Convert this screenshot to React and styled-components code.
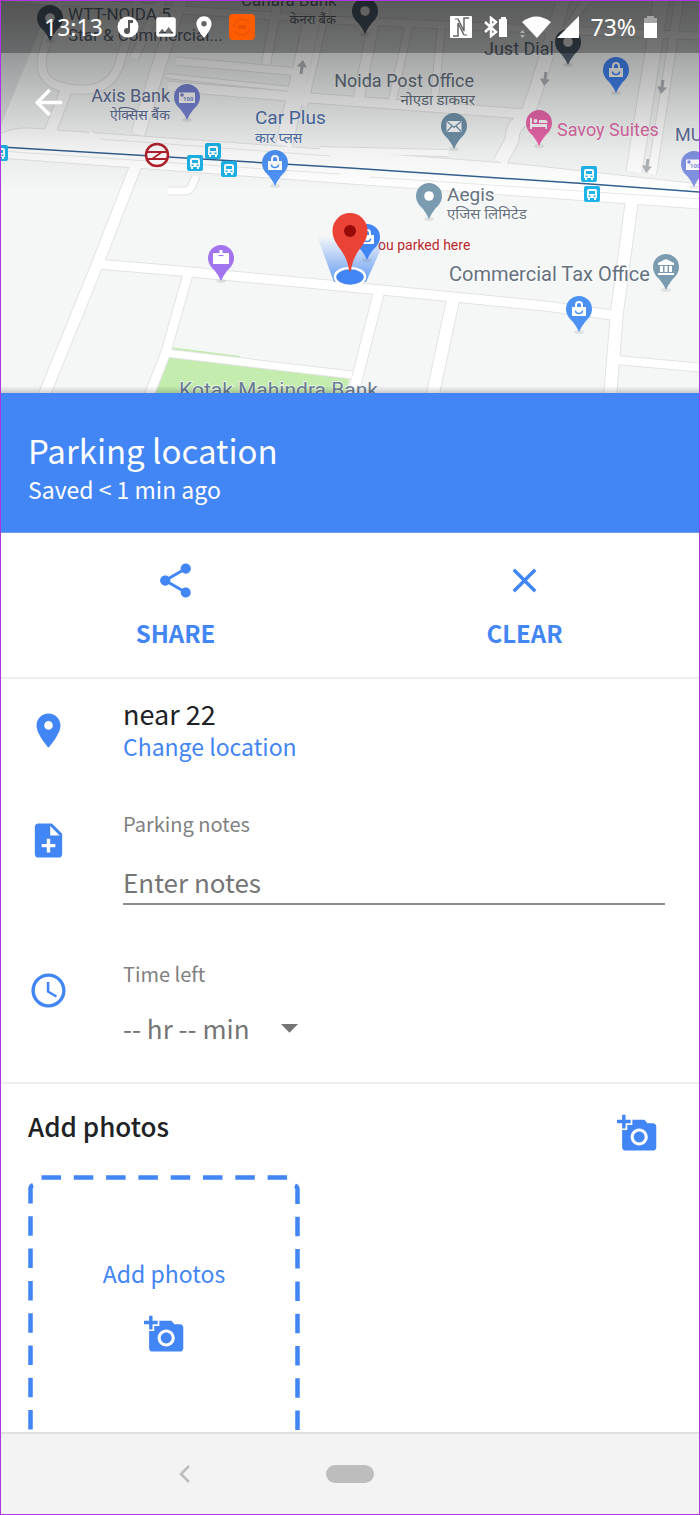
import React from 'react';
import styled, { createGlobalStyle } from 'styled-components';
import {
    MdAccessTime,
    MdAddAPhoto,
    MdArrowBack,
    MdArrowDropDown,
    MdClose,
    MdImage,
    MdNoteAdd,
    MdPlace,
    MdShare
} from 'react-icons/md';

const blue = '#4285f4';
const textFont = '"Noto Sans CJK JP", "Noto Sans", sans-serif';

const GlobalStyle = createGlobalStyle`
    * {
        box-sizing: border-box;
    }

    body {
        margin: 0;
        background: #fff;
        font-family: ${textFont};
    }

    button, input, select {
        font-family: inherit;
    }
`;

const Screen = styled.div`
    display: flex;
    flex-direction: column;
    height: 100vh;
    border: 1px solid #b035e0;
    overflow: hidden;
`;

const MapArea = styled.section`
    position: relative;
    flex: none;
    aspect-ratio: 698 / 392;
    overflow: hidden;
`;

const MapCanvas = styled.svg`
    display: block;
    width: 100%;
    height: 100%;
    font-family: Roboto, "Noto Sans", sans-serif;
`;

const StatusBar = styled.div`
    position: absolute;
    top: 0;
    left: 0;
    right: 0;
    display: flex;
    align-items: center;
    justify-content: space-between;
    height: 52px;
    padding: 0 42px 0 43px;
    background: rgba(0, 0, 0, 0.3);
    color: #fff;
    font-family: "Noto Sans", sans-serif;
    font-size: 23px;
`;

const StatusGroup = styled.div`
    display: flex;
    align-items: center;
    gap: ${({ $gap }) => $gap}px;

    svg {
        display: block;
    }
`;

const BackButton = styled.button`
    position: absolute;
    top: 81px;
    left: 27px;
    display: flex;
    padding: 0;
    border: 0;
    background: none;
    color: #fff;
    font-size: 41px;
`;

const Header = styled.header`
    flex: none;
    padding: 35px 28px 26px 27px;
    background: ${blue};
    border-bottom: 1px solid #6f9fe8;
    color: #fff;
`;

const Title = styled.h1`
    margin: 0;
    font-size: 33px;
    font-weight: 400;
    line-height: 44px;
`;

const Subtitle = styled.p`
    margin: 0;
    font-size: 23px;
    line-height: 34px;
`;

const Actions = styled.div`
    display: flex;
    flex: none;
    height: 146px;
    border-bottom: 2px solid #eee;
`;

const ActionButton = styled.button`
    display: flex;
    flex: 1;
    flex-direction: column;
    align-items: center;
    gap: 14px;
    padding: 27px 0 0;
    border: 0;
    background: none;
    color: ${blue};
    font-size: 24px;
    font-weight: 700;
    line-height: 36px;

    svg {
        font-size: 41px;
    }
`;

const Details = styled.div`
    display: flex;
    flex: none;
    flex-direction: column;
    gap: 46px;
    padding: 18px 34px 34px 27px;
    border-bottom: 2px solid #eee;
`;

const Row = styled.div`
    display: flex;
    align-items: ${({ $center }) => ($center ? 'center' : 'flex-start')};
    gap: 54px;
`;

const RowIcon = styled.span`
    display: flex;
    margin-top: ${({ $drop }) => ($drop ? '11px' : '0')};
    color: ${blue};
    font-size: 41px;
`;

const RowBody = styled.div`
    display: flex;
    flex: 1;
    flex-direction: column;
    align-items: flex-start;
`;

const Place = styled.div`
    color: #202124;
    font-size: 27px;
    line-height: 33px;
`;

const ChangeLink = styled.a`
    color: ${blue};
    font-size: 23px;
    line-height: 33px;
    text-decoration: none;
`;

const FieldLabel = styled.label`
    color: #808080;
    font-size: 20px;
    line-height: 30px;
`;

const NotesInput = styled.input`
    width: 100%;
    height: 46px;
    margin: 20px 0 8px;
    padding: 0;
    border: 0;
    border-bottom: 2px solid #8c8c8c;
    border-radius: 0;
    background: none;
    color: #202124;
    font-size: 26px;
    outline: none;

    &::placeholder {
        color: #757575;
        opacity: 1;
    }
`;

const SelectBox = styled.div`
    display: grid;
    align-items: center;
    justify-items: end;
    width: 187px;
    margin-top: 17px;

    > * {
        grid-area: 1 / 1;
    }

    svg {
        color: #757575;
        font-size: 41px;
        pointer-events: none;
    }
`;

const TimeSelect = styled.select`
    width: 100%;
    height: 42px;
    padding: 0;
    border: 0;
    background: none;
    color: #757575;
    font-size: 26px;
    appearance: none;
`;

const Photos = styled.section`
    flex: 1;
    min-height: 0;
    padding: 22px 41px 0 27px;
    overflow: hidden;
`;

const PhotosHead = styled.div`
    display: flex;
    justify-content: space-between;
    margin-bottom: 21px;
`;

const PhotosTitle = styled.h2`
    margin: 0;
    color: #202124;
    font-size: 26px;
    font-weight: 500;
    line-height: 40px;
`;

const IconButton = styled.button`
    display: flex;
    margin-top: 7px;
    padding: 0;
    border: 0;
    background: none;
    color: ${blue};
    font-size: 41px;
`;

const PhotoTile = styled.button`
    display: grid;
    width: 272px;
    height: 272px;
    padding: 0;
    border: 0;
    background: none;
    color: ${blue};
    font-size: 23px;
    line-height: 36px;

    > * {
        grid-area: 1 / 1;
    }
`;

const TileContent = styled.span`
    display: flex;
    flex-direction: column;
    align-items: center;
    gap: 23px;
    padding-top: 80px;

    svg {
        font-size: 41px;
    }
`;

const NavBar = styled.nav`
    display: grid;
    grid-template-columns: 1fr auto 1fr;
    align-items: center;
    flex: none;
    height: 82px;
    border-top: 2px solid #e0e0e0;
    background: #f3f3f3;
`;

const NavBack = styled.button`
    display: flex;
    justify-self: center;
    padding: 0 0 0 40px;
    border: 0;
    background: none;
`;

const NavHome = styled.button`
    width: 48px;
    height: 18px;
    padding: 0;
    border: 0;
    border-radius: 9px;
    background: #bdbdbd;
`;

const Glyph = ({ type }) => {
    switch (type) {
        case 'bag':
            return (
                <g>
                    <path d="M-7-2H7V7H-7z" fill="#fff" />
                    <path d="M-3-2V-4a3 3 0 0 1 6 0V-2" fill="none" stroke="#fff" strokeWidth="2" />
                    <path d="M-3.5 1.5a3.5 3 0 0 0 7 0" fill="none" stroke="currentColor" strokeWidth="1.6" />
                </g>
            );
        case 'mail':
            return (
                <g>
                    <path d="M-7.5-5h15V6h-15z" fill="#fff" />
                    <path d="M-7-4.500L0 1.500L7-4.500M-7 5.500L-2 0M7 5.500L2 0" fill="none" stroke="currentColor" strokeWidth="1.3" />
                </g>
            );
        case 'bed':
            return (
                <path d="M-9-5h2v6H8v5H6.500V4H-7v2h-2zM0-3h6q2.500 0 2.500 3H0zM-3.500-4a2 2 0 1 1 0 4a2 2 0 0 1 0-4z" fill="#fff" />
            );
        case 'cash':
            return (
                <g>
                    <path d="M-8-4.500H8V6H-8z" fill="#fff" />
                    <circle cx="-5" cy="-2" r="1.800" fill="currentColor" />
                    <text x="-4" y="4" fontSize="6" fontWeight="700" fill="currentColor">100</text>
                </g>
            );
        case 'case':
            return (
                <g>
                    <path d="M-8-5H8V6H-8zM-1.500-8h3v4h-3z" fill="#fff" />
                    <path d="M-2.500-2.500h5" stroke="currentColor" strokeWidth="1.200" />
                </g>
            );
        case 'bank':
            return (
                <path d="M-8-4L0-8L8-4V-2H-8zM-6-1h3v6h-3zM-1.500-1h3v6h-3zM3-1h3v6H3zM-8 6H8V8H-8z" fill="#fff" />
            );
        default:
            return <circle r="4.800" fill="#fff" />;
    }
};

const Pin = ({ x, y, color, type }) => (
    <g transform={`translate(${x} ${y})`} color={color}>
        <ellipse cx="0" cy="23" rx="5" ry="2" fill="#000" opacity="0.08" />
        <path d="M0-13a13 13 0 0 1 13 13C13 6 9 10 6 13Q2 18 0 23Q-2 18-6 13C-9 10-13 6-13 0A13 13 0 0 1 0-13z" fill={color} />
        <Glyph type={type} />
    </g>
);

const Bus = ({ x, y }) => (
    <g transform={`translate(${x} ${y})`}>
        <rect x="-8" y="-8" width="16" height="16" rx="2" fill="#1db4ea" />
        <path d="M-5-3q0-2 2-2h6q2 0 2 2V4H4V6H2V4H-2V6H-4V4H-5z" fill="#fff" />
        <path d="M-3-3H3V0H-3zM-3.500 1.500h2v1.500h-2zM1.500 1.500h2v1.500h-2z" fill="#1db4ea" />
    </g>
);

const roads = [
    ['M62 -5Q50 30 44 50Q34 82 66 88Q106 96 118 68L140 -5', 8],
    ['M67 88L50 132', 11],
    ['M182 -5L158 68L138 134', 13],
    ['M164 -5L134 58', 8],
    ['M278 0L266 64', 8],
    ['M176 61L300 72', 7],
    ['M168 86L310 98L525 114', 9],
    ['M166 76L300 90', 4],
    ['M312 20L284 146', 16],
    ['M330 -5L304 106', 6],
    ['M10 -2L330 20L700 36', 7],
    ['M375 16L358 102', 10],
    ['M410 20L392 102', 7],
    ['M442 22L434 104', 7],
    ['M565 -5L536 90L526 118Q512 124 512 140L500 162', 13],
    ['M590 -5L566 30', 7],
    ['M662 -5L634 172', 15],
    ['M680 -5L652 174', 8],
    ['M320 150L448 153', 6],
    ['M90 132L96 138L330 156', 4],
    ['M136 165L97 265L43 398', 11],
    ['M97 264L180 271L350 287L545 306L612 315', 9],
    ['M188 274L166 352L148 398', 9],
    ['M166 353L352 375', 7],
    ['M379 292L352 398', 10],
    ['M453 300L432 398', 12],
    ['M632 200L617 312L610 398', 12],
    ['M616 360L704 368', 8],
    ['M196 176L192 186Q190 191 184 191H168', 7]
];

const labels = [
    { x: 68, y: 20, size: 17, text: 'WTT-NOIDA 5' },
    { x: 68, y: 41, size: 17, text: 'Star & Commercial...' },
    { x: 241, y: 6, size: 17, text: 'Canara Bank' },
    { x: 336, y: 24, size: 13, text: 'केनरा बैंक', end: true },
    { x: 170, y: 102, size: 18, text: 'Axis Bank', end: true, color: '#62719a' },
    { x: 170, y: 120, size: 14, text: 'ऐक्सिस बैंक', end: true, color: '#62719a' },
    { x: 255, y: 124, size: 19, text: 'Car Plus', color: '#4f73ad' },
    { x: 255, y: 143, size: 14, text: 'कार प्लस', color: '#4f73ad' },
    { x: 474, y: 87, size: 18, text: 'Noida Post Office', end: true },
    { x: 475, y: 105, size: 15, text: 'नोएडा डाकघर', end: true },
    { x: 484, y: 55, size: 18, text: 'Just Dial' },
    { x: 557, y: 136, size: 18, text: 'Savoy Suites', color: '#e06ca8' },
    { x: 675, y: 141, size: 18, text: 'MU', color: '#62719a' },
    { x: 447, y: 201, size: 19, text: 'Aegis' },
    { x: 447, y: 219, size: 15, text: 'एजिस लिमिटेड' },
    { x: 449, y: 281, size: 20, text: 'Commercial Tax Office' },
    { x: 378, y: 250, size: 14, text: 'ou parked here', color: '#b8262a' },
    { x: 179, y: 397, size: 21, text: 'Kotak Mahindra Bank', color: '#6c7f96' }
];

const pins = [
    { x: 50, y: 18, color: '#566878', type: 'dot' },
    { x: 365, y: 11, color: '#566878', type: 'dot' },
    { x: 568, y: 42, color: '#566878', type: 'dot' },
    { x: 616, y: 70, color: '#4285f4', type: 'bag' },
    { x: 187, y: 97, color: '#7986d8', type: 'cash' },
    { x: 275, y: 163, color: '#4c92f5', type: 'bag' },
    { x: 454, y: 126, color: '#7193ab', type: 'mail' },
    { x: 539, y: 123, color: '#ec68ae', type: 'bed' },
    { x: 429, y: 196, color: '#7a9bb0', type: 'dot' },
    { x: 221, y: 258, color: '#a274ee', type: 'case' },
    { x: 579, y: 309, color: '#4c92f5', type: 'bag' },
    { x: 666, y: 267, color: '#7a9bb0', type: 'bank' }, 
    { x: 694, y: 164, color: '#8193e2', type: 'cash' }
];

const buses = [[0, 153], [195, 163], [213, 151], [229, 169], [589, 174], [592, 194]];

const arrows = [[302, 67, 0], [545, 79, 180], [662, 87, 180], [647, 166, 180]];

const ParkingMap = () => (
    <MapCanvas viewBox="1 1 698 392" preserveAspectRatio="xMidYMid slice" role="img" aria-label="Map">
        <defs>
            <linearGradient id="shade" x1="0" y1="0" x2="0" y2="1">
                <stop offset="0" stopColor="#000" stopOpacity="0.48" />
                <stop offset="0.27" stopColor="#000" stopOpacity="0.34" />
                <stop offset="0.55" stopColor="#000" stopOpacity="0.18" />
                <stop offset="0.8" stopColor="#000" stopOpacity="0.05" />
                <stop offset="1" stopColor="#000" stopOpacity="0" />
            </linearGradient>
            <linearGradient id="beam" x1="0" y1="1" x2="0" y2="0">
                <stop offset="0" stopColor="#4285f4" stopOpacity="0.8" />
                <stop offset="1" stopColor="#4285f4" stopOpacity="0" />
            </linearGradient>
            <linearGradient id="lip" x1="0" y1="0" x2="0" y2="1">
                <stop offset="0" stopColor="#000" stopOpacity="0" />
                <stop offset="1" stopColor="#000" stopOpacity="0.2" />
            </linearGradient>
        </defs>
        <rect width="700" height="394" fill="#f5f7f7" />
        <path d="M0 0H52L0 128z" fill="#e2e4e6" />
        <path d="M168 357L350 376L346 394H155zM170 347L240 356L240 358L170 349z" fill="#c3ecae" />
        {roads.map(([d, width]) => (
            <path key={d} d={d} fill="none" stroke="#e2e3e4" strokeWidth={width + 2} strokeLinejoin="round" />
        ))}
        <path d="M0 134Q14 127 30 128L350 151L520 164L700 184V209L350 184L0 158z" fill="#fff" stroke="#e2e3e4" />
        {roads.map(([d, width]) => (
            <path key={d} d={d} fill="none" stroke="#fff" strokeWidth={width} strokeLinejoin="round" />
        ))}
        <path d="M0 151L340 174M370 177L700 199M100 139L330 156" fill="none" stroke="#e6e7e8" />
        <path d="M0 147L350 168L590 184L700 192" fill="none" stroke="#33608f" strokeWidth="1.500" />
        {arrows.map(([x, y, turn]) => (
            <path
                key={x}
                d="M0-7L5 0H1.500V7H-1.500V0H-5z"
                transform={`translate(${x} ${y}) rotate(${turn + 8})`}
                fill="#b0b5ba"
            />
        ))}
        <g transform="translate(157 155)" fill="none" stroke="#b3202c">
            <circle r="11" fill="#fff" strokeWidth="2.500" />
            <path d="M-11-3H5L-5 4H11M-11 4H-5M5-3H11" strokeWidth="1.800" />
        </g>
        {buses.map(([x, y]) => (
            <Bus key={x} x={x} y={y} />
        ))}
        {labels.map(({ x, y, size, text, end, color = '#66727e' }) => (
            <text
                key={text}
                x={x}
                y={y}
                fontSize={size}
                textAnchor={end ? 'end' : 'start'}
                fill={color}
                stroke="#fff"
                strokeWidth="2"
                strokeOpacity="0.6"
                paintOrder="stroke"
            >
                {text}
            </text>
        ))}
        {pins.map((pin) => (
            <Pin key={pin.x} {...pin} />
        ))}
        <path d="M317 236L334 282H366L385 240z" fill="url(#beam)" />
        <Pin x={367} y={237} color={blue} type="bag" />
        <ellipse cx="350" cy="277" rx="15" ry="9" fill={blue} stroke="#fff" strokeWidth="2.500" />
        <path d="M350 213a17.500 17.500 0 0 1 17.500 17.500C367.500 246 354 249 351 270Q350 273 349 270C346 249 332.500 246 332.500 230.500A17.500 17.500 0 0 1 350 213z" fill="#ea4335" />
        <circle cx="350" cy="231" r="6" fill="#960a0a" />
        <rect width="700" height="190" fill="url(#shade)" />
        <rect y="386" width="700" height="8" fill="url(#lip)" />
    </MapCanvas>
);

const MusicIcon = () => (
    <svg width="26" height="26" viewBox="0 0 26 26">
        <circle cx="13" cy="13" r="10.500" fill="#fff" />
        <path d="M13 6h5v3h-3v8h-2z" fill="#555" />
        <circle cx="12" cy="17" r="3" fill="#555" />
    </svg>
);

const RecorderIcon = () => (
    <svg width="26" height="26" viewBox="0 0 26 26">
        <rect width="26" height="26" rx="4" fill="#ff5c00" />
        <circle cx="13" cy="13" r="8" fill="none" stroke="#e8540a" strokeWidth="1.500" strokeDasharray="21 4" />
        <circle cx="11" cy="13" r="1.500" fill="none" stroke="#d9480a" />
        <circle cx="15" cy="13" r="1.500" fill="none" stroke="#d9480a" />
    </svg>
);

const NfcIcon = () => (
    <svg width="22" height="22" viewBox="0 0 22 22">
        <rect width="22" height="22" rx="1" fill="#fff" />
        <path d="M3 20H8V7L14 19M19 2H14V15L8 3" fill="none" stroke="#666" strokeWidth="1.500" />
        <path d="M5 3L8 3M14 19H17" stroke="#666" strokeWidth="1" />
    </svg>
);

const BluetoothIcon = () => (
    <svg width="24" height="22" viewBox="0 0 24 22">
        <path d="M1 6L12 16L7 20V2L12 6L1 16" fill="none" stroke="#fff" strokeWidth="2.500" />
        <path d="M15 3h2V1h5v2h1v18h-8z" fill="#fff" />
    </svg>
);

const WifiIcon = () => (
    <svg width="32" height="22" viewBox="0 0 32 22">
        <path d="M2 6Q16-5 31 6L17 22z" fill="#fff" />
        <path d="M0 17L2.500 14L5 17zM0 19H5L2.500 22z" fill="#aaa" />
    </svg>
);

const SignalIcon = () => (
    <svg width="22" height="22" viewBox="0 0 22 22">
        <path d="M22 0V22H0z" fill="#fff" />
    </svg>
);

const BatteryIcon = () => (
    <svg width="13" height="22" viewBox="0 0 13 22">
        <path d="M0 2H3V0H10V2H13V7H0z" fill="#a5a5a5" />
        <path d="M0 7H13V22H0z" fill="#fff" />
    </svg>
);

const TileOutline = () => (
    <svg width="272" height="272" viewBox="0 0 272 272" fill="none" stroke={blue} strokeWidth="4.500" strokeDasharray="19.500 12.800">
        <path d="M13.500 2.500H260" />
        <path d="M5 10Q2.500 11 2.500 14V272" />
        <path d="M267 10.500Q269.500 11.500 269.500 14.500V272" />
    </svg>
);

const App = () => (
    <Screen>
        <GlobalStyle />
        <MapArea>
            <ParkingMap />
            <StatusBar>
                <StatusGroup $gap={12}>
                    <span>13:13</span>
                    <MusicIcon />
                    <MdImage size={26} />
                    <MdPlace size={26} />
                    <RecorderIcon />
                </StatusGroup>
                <StatusGroup $gap={12}>
                    <NfcIcon />
                    <BluetoothIcon />
                    <StatusGroup $gap={5}>
                        <WifiIcon />
                        <SignalIcon />
                    </StatusGroup>
                    <StatusGroup $gap={8}>
                        <span>73%</span>
                        <BatteryIcon />
                    </StatusGroup>
                </StatusGroup>
            </StatusBar>
            <BackButton aria-label="Back">
                <MdArrowBack />
            </BackButton>
        </MapArea>
        <Header>
            <Title>Parking location</Title>
            <Subtitle>Saved &lt; 1 min ago</Subtitle>
        </Header>
        <Actions>
            <ActionButton>
                <MdShare />
                SHARE
            </ActionButton>
            <ActionButton>
                <MdClose />
                CLEAR
            </ActionButton>
        </Actions>
        <Details>
            <Row $center>
                <RowIcon>
                    <MdPlace />
                </RowIcon>
                <RowBody>
                    <Place>near 22</Place>
                    <ChangeLink href="#location">Change location</ChangeLink>
                </RowBody>
            </Row>
            <Row>
                <RowIcon $drop>
                    <MdNoteAdd />
                </RowIcon>
                <RowBody>
                    <FieldLabel htmlFor="notes">Parking notes</FieldLabel>
                    <NotesInput id="notes" placeholder="Enter notes" />
                </RowBody>
            </Row>
            <Row>
                <RowIcon $drop>
                    <MdAccessTime />
                </RowIcon>
                <RowBody>
                    <FieldLabel htmlFor="time">Time left</FieldLabel>
                    <SelectBox>
                        <TimeSelect id="time">
                            <option>-- hr -- min</option>
                        </TimeSelect>
                        <MdArrowDropDown />
                    </SelectBox>
                </RowBody>
            </Row>
        </Details>
        <Photos>
            <PhotosHead>
                <PhotosTitle>Add photos</PhotosTitle>
                <IconButton aria-label="Take a photo">
                    <MdAddAPhoto />
                </IconButton>
            </PhotosHead>
            <PhotoTile>
                <TileOutline />
                <TileContent>
                    Add photos
                    <MdAddAPhoto />
                </TileContent>
            </PhotoTile>
        </Photos>
        <NavBar>
            <NavBack aria-label="Back">
                <svg width="12" height="18" viewBox="0 0 12 18" fill="none" stroke="#bdbdbd" strokeWidth="2.500">
                    <path d="M11 1L3 9L11 17" />
                </svg>
            </NavBack>
            <NavHome aria-label="Home" />
        </NavBar>
    </Screen>
);

export default App;
